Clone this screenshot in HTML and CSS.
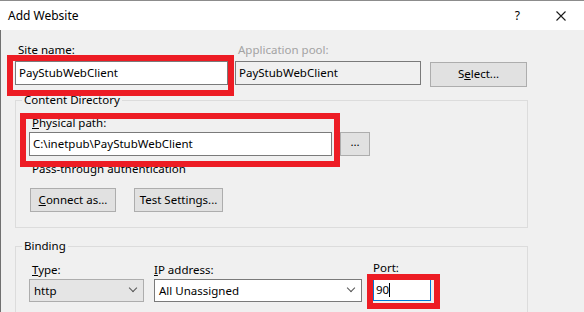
FILE: index.html
```html
<html>
    <head>
        <link rel="stylesheet" href="styles.css">
    </head>
    <body>
        <div class="window">
            <div class="titlebar">
                <span class="title">Add Website</span>
                <span class="help">?</span>
                <svg class="close" width="10" height="10" viewBox="0 0 10 10">
                    <path d="M0.5 0.5 L9.5 9.5 M9.5 0.5 L0.5 9.5" stroke="#1a1a1a" stroke-width="1.1" fill="none"/>
                </svg>
            </div>
            <div class="content">
                <div class="site-row">
                    <div class="field site-name">
                        <div class="label">Site name:</div>
                        <div class="textbox">PayStubWebClient</div>
                    </div>
                    <div class="field app-pool">
                        <div class="label disabled">Application pool:</div>
                        <div class="textbox readonly">PayStubWebClient</div>
                    </div>
                    <div class="btn select">S<u>e</u>lect...</div>
                </div>

                <fieldset class="group content-dir">
                    <legend>Content Directory</legend>
                    <div class="label"><u>P</u>hysical path:</div>
                    <div class="path-row">
                        <div class="textbox path">C:\inetpub\PayStubWebClient</div>
                        <div class="btn browse">...</div>
                    </div>
                    <div class="note">Pass-through authentication</div>
                    <div class="btn-row">
                        <div class="btn connect"><u>C</u>onnect as...</div>
                        <div class="btn test">Test Settings...</div>
                    </div>
                </fieldset>

                <fieldset class="group binding">
                    <legend>Binding</legend>
                    <div class="binding-row">
                        <div class="field type">
                            <div class="label"><u>T</u>ype:</div>
                            <div class="combo grey">http<span class="chevron"></span></div>
                        </div>
                        <div class="field ip">
                            <div class="label flush"><u>I</u>P address:</div>
                            <div class="combo">All Unassigned<span class="chevron"></span></div>
                        </div>
                        <div class="field port">
                            <div class="label flush port-label">Port:</div>
                            <div class="textbox focused">90<span class="caret"></span></div>
                        </div>
                    </div>
                </fieldset>
            </div>

            <div class="mark mark-site"></div>
            <div class="mark mark-path"></div>
            <div class="mark mark-port"></div>
        </div>
    </body>
</html>
```

FILE: styles.css
```css
body{
    margin: 0;
    font-family: "Noto Sans", "Open Sans", sans-serif;
    font-size: 11.5px;
    color: #000;
    overflow: hidden;
}

.window{
    position: relative;
    width: 584px;
    height: 312px;
    overflow: hidden;
    background-color: #f0f0f0;
}

.titlebar{
    display: flex;
    align-items: center;
    height: 30px;
    background-color: #fff;
    border-top: 1px solid #8c8c8c;
    box-sizing: border-box;
}

.title{
    flex-grow: 1;
    padding-left: 8px;
    font-size: 12px;
}

.help{
    margin-right: 36px;
    font-size: 12px;
}

.close{
    margin-right: 18px;
}

.content{
    border-left: 1px solid #707070;
    padding: 12px 0 0 14px;
}

u{
    text-decoration: underline;
    text-underline-offset: 1px;
}

.label{
    line-height: 16px;
    padding-left: 3px;
    white-space: nowrap;
}

.label.flush{
    padding-left: 0;
}

.port-label{
    margin-top: -2px;
    margin-bottom: 2px;
}

.disabled{
    color: #a3a3a3;
}

.textbox{
    box-sizing: border-box;
    height: 24px;
    line-height: 22px;
    padding-left: 3px;
    border: 1px solid #7a7a7a;
    background-color: #fff;
    white-space: nowrap;
    margin-top: 3px;
}

.readonly{
    background-color: #f0f0f0;
}

.focused{
    border-color: #0078d7;
    padding-left: 2px;
}

.caret{
    display: inline-block;
    width: 1px;
    height: 14px;
    background-color: #000;
    vertical-align: -3px;
}

.btn{
    box-sizing: border-box;
    height: 24px;
    line-height: 22px;
    border: 1px solid #adadad;
    background-color: #e1e1e1;
    text-align: center;
    white-space: nowrap;
}

/* site row */
.site-row{
    display: flex;
    align-items: flex-end;
}

.site-name{
    width: 213px;
}

.app-pool{
    width: 186px;
    margin-left: 7px;
}

.select{
    width: 97px;
    height: 25px;
    margin-left: 9px;
    margin-bottom: -2px;
}

/* group boxes */
.group{
    box-sizing: border-box;
    width: 513px;
    margin: 8px 0 0 0;
    padding: 8px 0 15px 13px;
    border: 1px solid #dcdcdc;
    min-width: 0;
}

.group legend{
    margin-left: -7px;
    padding: 0 2px;
    line-height: 14px;
}

.path-row{
    display: flex;
    align-items: flex-end;
}

.path{
    width: 303px;
    margin-top: 1px;
    padding-left: 3px;
}

.browse{
    width: 30px;
    margin-left: 8px;
    line-height: 18px;
}

.note{
    padding-left: 3px;
    margin-top: 5px;
    line-height: 16px;
}

.btn-row{
    display: flex;
    margin-top: 11px;
    padding-left: 1px;
}

.connect{
    width: 86px;
}

.test{
    width: 89px;
    margin-left: 18px;
}

.binding{
    margin-top: 11px;
    padding-top: 9px;
    height: 80px;
}

.binding-row{
    display: flex;
}

.binding .textbox,
.binding .combo{
    margin-top: 1px;
}

.combo{
    position: relative;
    box-sizing: border-box;
    height: 23px;
    line-height: 21px;
    padding-left: 4px;
    border: 1px solid #7a7a7a;
    background-color: #fff;
}

.combo.grey{
    background-color: #e5e5e5;
    border-color: #adadad;
}

.chevron{
    position: absolute;
    right: 7px;
    top: 5px;
    width: 5px;
    height: 5px;
    border-right: 1px solid #555;
    border-bottom: 1px solid #555;
    transform: rotate(45deg);
}

.type{
    width: 115px;
}

.ip{
    width: 208px;
    margin-left: 10px;
}

.port{
    width: 58px;
    margin-left: 11px;
}

.port .textbox{
    height: 23px;
    line-height: 21px;
}

/* red annotation boxes drawn over the dialog */
.mark{
    position: absolute;
    border: 6px solid #ed1c24;
    box-sizing: border-box;
}

.mark-site{
    left: 7px;
    top: 55px;
    width: 227px;
    height: 41px;
}

.mark-path{
    left: 20px;
    top: 113px;
    width: 320px;
    height: 54px;
}

.mark-port{
    left: 367px;
    top: 274px;
    width: 73px;
    height: 35px;
}
```
